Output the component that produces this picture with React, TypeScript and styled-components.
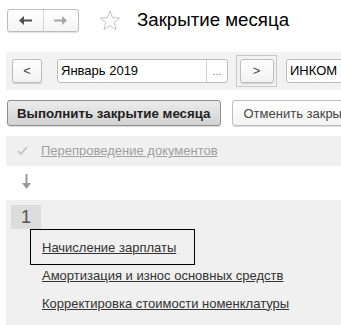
import styled, { createGlobalStyle } from 'styled-components';

const GlobalStyle = createGlobalStyle`
	html, body {
		margin: 0;
		padding: 0;
		background: #ffffff;
		overflow: hidden;
	}
	body {
		font-family: Arial, 'Liberation Sans', sans-serif;
		color: #333333;
	}
`;

const App = () => {
	return (
		<>
			<GlobalStyle />
			<StPage>
				<StHeader>
					<StNavGroup>
						<StNavButton>
							<svg width="13" height="9" viewBox="0 0 13 9">
								<path d="M0 4.5 L5 0 V3.5 H13 V5.5 H5 V9 Z" fill="#505050" />
							</svg>
						</StNavButton>
						<StNavButton>
							<svg width="13" height="9" viewBox="0 0 13 9">
								<path d="M13 4.5 L8 0 V3.5 H0 V5.5 H8 V9 Z" fill="#a8a8a8" />
							</svg>
						</StNavButton>
					</StNavGroup>
					<StStar width="22" height="21" viewBox="0 0 22 21">
						<path
							d="M11 1 L13.6 7.7 L20.8 8.1 L15.2 12.6 L17.1 19.6 L11 15.7 L4.9 19.6 L6.8 12.6 L1.2 8.1 L8.4 7.7 Z"
							fill="none"
							stroke="#c4c4c4"
							strokeWidth="1"
						/>
					</StStar>
					<StTitle>Закрытие месяца</StTitle>
				</StHeader>

				<StPeriodBar>
					<StSmallButton>&lt;</StSmallButton>
					<StField $width={171}>
						<StFieldText>Январь 2019</StFieldText>
						<StFieldChoose>...</StFieldChoose>
					</StField>
					<StFocusFrame>
						<StSmallButton>&gt;</StSmallButton>
					</StFocusFrame>
					<StField $width={80}>
						<StFieldText>ИНКОМ ООО</StFieldText>
					</StField>
				</StPeriodBar>

				<StCommandBar>
					<StCommandButton $primary>Выполнить закрытие месяца</StCommandButton>
					<StCommandButton>Отменить закрытие месяца</StCommandButton>
				</StCommandBar>

				<StStepPanel $pad="6px 0 7px 0">
					<StDoneRow>
						<StCheck width="11" height="9" viewBox="0 0 11 9">
							<path d="M1 5 L4 8 L10 1" fill="none" stroke="#c0c0c0" strokeWidth="1.6" />
						</StCheck>
						<StDoneLink>Перепроведение документов</StDoneLink>
					</StDoneRow>
				</StStepPanel>

				<StArrowRow>
					<svg width="9" height="15" viewBox="0 0 9 15">
						<path d="M3.5 0 H5.5 V9 H9 L4.5 15 L0 9 H3.5 Z" fill="#9a9a9a" />
					</svg>
				</StArrowRow>

				<StStepPanel $pad="5px 0 9px 0">
					<StStepNumber>1</StStepNumber>
					<StTaskList>
						<StTask $focused>
							<StTaskLink>Начисление зарплаты</StTaskLink>
						</StTask>
						<StTask>
							<StTaskLink>Амортизация и износ основных средств</StTaskLink>
						</StTask>
						<StTask>
							<StTaskLink>Корректировка стоимости номенклатуры</StTaskLink>
						</StTask>
					</StTaskList>
				</StStepPanel>
			</StPage>
		</>
	);
};

export default App;

const StPage = styled.div`
	width: 341px;
	height: 325px;
	overflow: hidden;
`;

const StHeader = styled.div`
	display: flex;
	align-items: center;
	height: 40px;
	padding: 0 0 0 7px;
`;

const StNavGroup = styled.div`
	display: flex;
	width: 72px;
	height: 23px;
	border: 1px solid #bdbdbd;
	border-radius: 3px;
	box-sizing: border-box;
	background: linear-gradient(#ffffff, #f4f4f4);
	box-shadow: 0 1px 1px rgba(0, 0, 0, 0.12);
	& > button + button {
		border-left: 1px solid #d6d6d6;
	}
`;

const StNavButton = styled.button`
	flex: 1;
	display: flex;
	align-items: center;
	justify-content: center;
	border: none;
	background: transparent;
	padding: 0;
`;

const StStar = styled.svg`
	margin-left: 20px;
	flex-shrink: 0;
`;

const StTitle = styled.h1`
	margin: 0 0 0 16px;
	font-size: 18.7px;
	font-weight: normal;
	color: #000000;
	white-space: nowrap;
`;

const StPeriodBar = styled.div`
	display: flex;
	align-items: center;
	margin: 12px 0 0 6px;
	height: 38px;
	padding-left: 6px;
	background: #f2f2f2;
	white-space: nowrap;
`;

const StSmallButton = styled.button`
	width: 30px;
	height: 24px;
	box-sizing: border-box;
	border: 1px solid #bdbdbd;
	border-radius: 3px;
	background: linear-gradient(#ffffff, #f2f2f2);
	box-shadow: 0 1px 1px rgba(0, 0, 0, 0.15);
	font-family: Arial, 'Liberation Sans', sans-serif;
	font-size: 13px;
	color: #444444;
	padding: 0 0 2px 0;
	flex-shrink: 0;
`;

const StFocusFrame = styled.div`
	display: flex;
	align-items: center;
	justify-content: center;
	width: 41px;
	height: 32px;
	box-sizing: border-box;
	border: 1px solid #c8c8c8;
	margin-left: 8px;
	flex-shrink: 0;
	& > button {
		width: 34px;
	}
`;

const StField = styled.div<{ $width: number }>`
	display: flex;
	width: ${(p) => p.$width}px;
	height: 24px;
	box-sizing: border-box;
	border: 1px solid #bdbdbd;
	border-radius: 3px;
	background: #ffffff;
	margin-left: 15px;
	flex-shrink: 0;
	overflow: hidden;
	&:last-child {
		margin-left: 9px;
	}
`;

const StFieldText = styled.div`
	flex: 1;
	padding: 0 0 0 3px;
	line-height: 22px;
	font-size: 13px;
	color: #000000;
	overflow: hidden;
`;

const StFieldChoose = styled.div`
	width: 20px;
	border-left: 1px solid #d0d0d0;
	text-align: center;
	font-size: 11px;
	line-height: 22px;
	color: #777777;
`;

const StCommandBar = styled.div`
	display: flex;
	gap: 11px;
	margin: 10px 0 0 7px;
	white-space: nowrap;
`;

const StCommandButton = styled.button<{ $primary?: boolean }>`
	height: 26px;
	box-sizing: border-box;
	padding: 0 ${(p) => (p.$primary ? '9px' : '11px')};
	border: 1px solid ${(p) => (p.$primary ? '#8f8f8f' : '#bdbdbd')};
	border-radius: 3px;
	background: ${(p) => (p.$primary ? 'linear-gradient(#ececec, #d2d2d2)' : 'linear-gradient(#ffffff, #f4f4f4)')};
	box-shadow: 0 1px 1px rgba(0, 0, 0, 0.15);
	font-family: Arial, 'Liberation Sans', sans-serif;
	font-size: ${(p) => (p.$primary ? '13.3px' : '13px')};
	font-weight: ${(p) => (p.$primary ? 'bold' : 'normal')};
	color: ${(p) => (p.$primary ? '#222222' : '#444444')};
	flex-shrink: 0;
`;

const StStepPanel = styled.div<{ $pad: string }>`
	margin: 10px 0 0 6px;
	padding: ${(p) => p.$pad};
	background: #f0f0f0;
`;

const StDoneRow = styled.div`
	display: flex;
	align-items: center;
	padding-left: 11px;
	height: 17px;
`;

const StCheck = styled.svg`
	flex-shrink: 0;
`;

const StDoneLink = styled.span`
	margin-left: 13px;
	font-size: 13px;
	color: #a0a0a0;
	text-decoration: underline;
	white-space: nowrap;
`;

const StArrowRow = styled.div`
	display: flex;
	padding: 8px 0 0 22px;
	height: 16px;
`;

const StStepNumber = styled.div`
	width: 30px;
	height: 24px;
	margin-left: 5px;
	background: #dcdcdc;
	font-size: 18px;
	line-height: 24px;
	text-align: center;
	color: #555555;
`;

const StTaskList = styled.div`
	display: flex;
	flex-direction: column;
	margin: 0 0 0 24px;
`;

const StTask = styled.div<{ $focused?: boolean }>`
	display: flex;
	align-items: center;
	height: ${(p) => (p.$focused ? '36px' : '28px')};
	width: ${(p) => (p.$focused ? '165px' : 'auto')};
	box-sizing: border-box;
	border: ${(p) => (p.$focused ? '1px solid #000000' : 'none')};
	padding-left: ${(p) => (p.$focused ? '11px' : '12px')};
	margin-bottom: ${(p) => (p.$focused ? '-4px' : '0')};
`;

const StTaskLink = styled.span`
	font-size: 13px;
	color: #333333;
	text-decoration: underline;
	white-space: nowrap;
`;
